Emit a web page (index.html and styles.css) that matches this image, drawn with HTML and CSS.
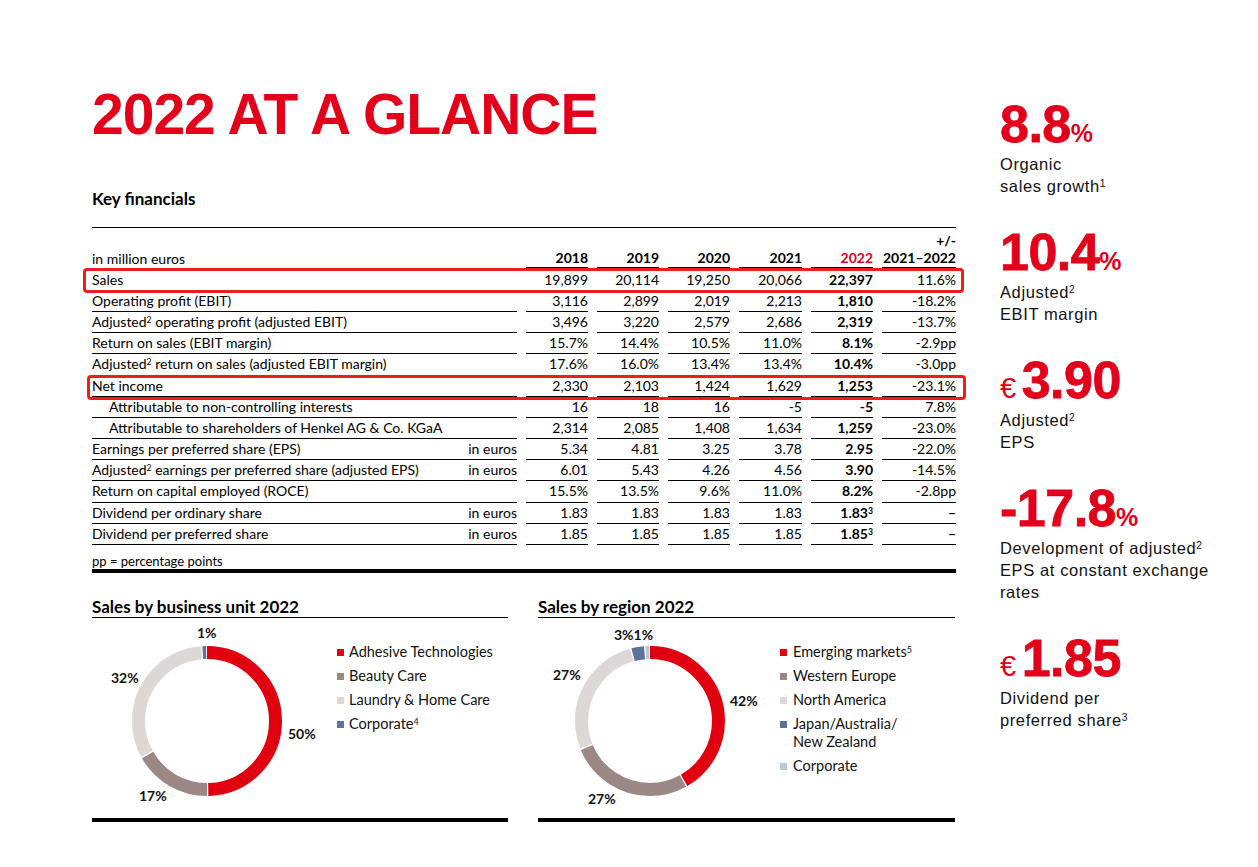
FILE: index.html
```html
<!DOCTYPE html>
<html lang="en">
<head>
<meta charset="utf-8">
<title>2022 at a glance</title>
<link rel="stylesheet" href="styles.css">
</head>
<body>
<div class="page">
  <div class="main">
    <h1 class="title">2022 AT A GLANCE</h1>
    <h2 class="section-title">Key financials</h2>

    <div class="fin">
      <div class="row head">
        <div class="c lbl">in million euros</div>
        <div class="c">2018</div>
        <div class="c">2019</div>
        <div class="c">2020</div>
        <div class="c">2021</div>
        <div class="c red">2022</div>
        <div class="c two"><span>+/-</span><span>2021–2022</span></div>
      </div>

      <div class="row hl hl-sales">
        <div class="c lbl"><span>Sales</span></div>
        <div class="c">19,899</div><div class="c">20,114</div><div class="c">19,250</div><div class="c">20,066</div>
        <div class="c b">22,397</div><div class="c">11.6%</div>
      </div>
      <div class="row">
        <div class="c lbl"><span>Operating profit (EBIT)</span></div>
        <div class="c">3,116</div><div class="c">2,899</div><div class="c">2,019</div><div class="c">2,213</div>
        <div class="c b">1,810</div><div class="c">-18.2%</div>
      </div>
      <div class="row">
        <div class="c lbl"><span>Adjusted<span class="sup">2</span> operating profit (adjusted EBIT)</span></div>
        <div class="c">3,496</div><div class="c">3,220</div><div class="c">2,579</div><div class="c">2,686</div>
        <div class="c b">2,319</div><div class="c">-13.7%</div>
      </div>
      <div class="row">
        <div class="c lbl"><span>Return on sales (EBIT margin)</span></div>
        <div class="c">15.7%</div><div class="c">14.4%</div><div class="c">10.5%</div><div class="c">11.0%</div>
        <div class="c b">8.1%</div><div class="c">-2.9pp</div>
      </div>
      <div class="row">
        <div class="c lbl"><span>Adjusted<span class="sup">2</span> return on sales (adjusted EBIT margin)</span></div>
        <div class="c">17.6%</div><div class="c">16.0%</div><div class="c">13.4%</div><div class="c">13.4%</div>
        <div class="c b">10.4%</div><div class="c">-3.0pp</div>
      </div>
      <div class="row hl hl-net">
        <div class="c lbl"><span>Net income</span></div>
        <div class="c">2,330</div><div class="c">2,103</div><div class="c">1,424</div><div class="c">1,629</div>
        <div class="c b">1,253</div><div class="c">-23.1%</div>
      </div>
      <div class="row">
        <div class="c lbl ind"><span>Attributable to non-controlling interests</span></div>
        <div class="c">16</div><div class="c">18</div><div class="c">16</div><div class="c">-5</div>
        <div class="c b">-5</div><div class="c">7.8%</div>
      </div>
      <div class="row">
        <div class="c lbl ind"><span>Attributable to shareholders of Henkel AG &amp; Co. KGaA</span></div>
        <div class="c">2,314</div><div class="c">2,085</div><div class="c">1,408</div><div class="c">1,634</div>
        <div class="c b">1,259</div><div class="c">-23.0%</div>
      </div>
      <div class="row">
        <div class="c lbl"><span>Earnings per preferred share (EPS)</span><span>in euros</span></div>
        <div class="c">5.34</div><div class="c">4.81</div><div class="c">3.25</div><div class="c">3.78</div>
        <div class="c b">2.95</div><div class="c">-22.0%</div>
      </div>
      <div class="row">
        <div class="c lbl"><span>Adjusted<span class="sup">2</span> earnings per preferred share (adjusted EPS)</span><span>in euros</span></div>
        <div class="c">6.01</div><div class="c">5.43</div><div class="c">4.26</div><div class="c">4.56</div>
        <div class="c b">3.90</div><div class="c">-14.5%</div>
      </div>
      <div class="row">
        <div class="c lbl"><span>Return on capital employed (ROCE)</span></div>
        <div class="c">15.5%</div><div class="c">13.5%</div><div class="c">9.6%</div><div class="c">11.0%</div>
        <div class="c b">8.2%</div><div class="c">-2.8pp</div>
      </div>
      <div class="row">
        <div class="c lbl"><span>Dividend per ordinary share</span><span>in euros</span></div>
        <div class="c">1.83</div><div class="c">1.83</div><div class="c">1.83</div><div class="c">1.83</div>
        <div class="c b">1.83<span class="sup">3</span></div><div class="c b">–</div>
      </div>
      <div class="row">
        <div class="c lbl"><span>Dividend per preferred share</span><span>in euros</span></div>
        <div class="c">1.85</div><div class="c">1.85</div><div class="c">1.85</div><div class="c">1.85</div>
        <div class="c b">1.85<span class="sup">3</span></div><div class="c b">–</div>
      </div>

      <p class="note">pp = percentage points</p>
    </div>

    <div class="bottom">
      <section class="panel">
        <h3 class="panel-title">Sales by business unit 2022</h3>
        <div class="chart-row">
          <div class="canvas canvas-left">
            <svg class="donut donut-left" width="160" height="160" viewBox="0 0 160 160">
              <g transform="rotate(-90 80 80)" fill="none" stroke-width="13">
                <circle cx="80" cy="80" r="68.5" pathLength="100" stroke="#e1000f" stroke-dasharray="49.7 100" stroke-dashoffset="0"/>
                <circle cx="80" cy="80" r="68.5" pathLength="100" stroke="#9b8783" stroke-dasharray="16.7 100" stroke-dashoffset="-50"/>
                <circle cx="80" cy="80" r="68.5" pathLength="100" stroke="#ddd7d5" stroke-dasharray="31.7 100" stroke-dashoffset="-67"/>
                <circle cx="80" cy="80" r="68.5" pathLength="100" stroke="#5a729c" stroke-dasharray="0.8 100" stroke-dashoffset="-99"/>
              </g>
            </svg>
            <span class="pl" style="left:105px;top:7px">1%</span>
            <span class="pl" style="left:19px;top:52px">32%</span>
            <span class="pl" style="left:47px;top:170px">17%</span>
            <span class="pl" style="left:196px;top:108px">50%</span>
          </div>
          <ul class="legend">
            <li><i class="sq c-red"></i><span>Adhesive Technologies</span></li>
            <li><i class="sq c-brown"></i><span>Beauty Care</span></li>
            <li><i class="sq c-light"></i><span>Laundry &amp; Home Care</span></li>
            <li><i class="sq c-blue"></i><span>Corporate<span class="sup">4</span></span></li>
          </ul>
        </div>
      </section>

      <section class="panel">
        <h3 class="panel-title">Sales by region 2022</h3>
        <div class="chart-row">
          <div class="canvas canvas-right">
            <svg class="donut donut-right" width="160" height="160" viewBox="0 0 160 160">
              <g transform="rotate(-90 80 80)" fill="none" stroke-width="13">
                <circle cx="80" cy="80" r="68.5" pathLength="100" stroke="#e1000f" stroke-dasharray="41.7 100" stroke-dashoffset="0"/>
                <circle cx="80" cy="80" r="68.5" pathLength="100" stroke="#9b8783" stroke-dasharray="26.7 100" stroke-dashoffset="-42"/>
                <circle cx="80" cy="80" r="68.5" pathLength="100" stroke="#ddd7d5" stroke-dasharray="26.7 100" stroke-dashoffset="-69"/>
                <circle cx="80" cy="80" r="68.5" pathLength="100" stroke="#5a729c" stroke-dasharray="2.7 100" stroke-dashoffset="-96"/>
                <circle cx="80" cy="80" r="68.5" pathLength="100" stroke="#b8cad9" stroke-dasharray="0.8 100" stroke-dashoffset="-99"/>
              </g>
            </svg>
            <span class="pl" style="left:76px;top:9px">3%1%</span>
            <span class="pl" style="left:15px;top:49px">27%</span>
            <span class="pl" style="left:192px;top:75px">42%</span>
            <span class="pl" style="left:50px;top:173px">27%</span>
          </div>
          <ul class="legend legend-right">
            <li><i class="sq c-red"></i><span>Emerging markets<span class="sup">5</span></span></li>
            <li><i class="sq c-brown"></i><span>Western Europe</span></li>
            <li><i class="sq c-light"></i><span>North America</span></li>
            <li><i class="sq c-blue"></i><span>Japan/Australia/<br>New Zealand</span></li>
            <li><i class="sq c-lblue"></i><span>Corporate</span></li>
          </ul>
        </div>
      </section>
    </div>
  </div>

  <aside class="stats">
    <div class="stat">
      <div class="num">8.8<span class="pct">%</span></div>
      <div class="lab">Organic<br>sales growth<span class="sup">1</span></div>
    </div>
    <div class="stat">
      <div class="num">10.4<span class="pct">%</span></div>
      <div class="lab">Adjusted<span class="sup">2</span><br>EBIT margin</div>
    </div>
    <div class="stat">
      <div class="num"><span class="eur">€</span>3.90</div>
      <div class="lab">Adjusted<span class="sup">2</span><br>EPS</div>
    </div>
    <div class="stat">
      <div class="num">-17.8<span class="pct">%</span></div>
      <div class="lab">Development of adjusted<span class="sup">2</span><br>EPS at constant exchange<br>rates</div>
    </div>
    <div class="stat">
      <div class="num"><span class="eur">€</span>1.85</div>
      <div class="lab">Dividend per<br>preferred share<span class="sup">3</span></div>
    </div>
  </aside>
</div>
</body>
</html>
```

FILE: styles.css
```css
* { box-sizing: border-box; }
html, body { margin: 0; padding: 0; background: #fff; }
body { font-family: Lato, "Liberation Sans", sans-serif; color: #000; }

.page {
  display: flex;
  width: 1258px;
  height: 867px;
  padding: 86px 0 0 92px;
  overflow: hidden;
}
.main { width: 864px; flex: none; }

.title {
  margin: 0;
  font: 700 57px/57px "Liberation Sans", Arial, sans-serif;
  letter-spacing: -1px;
  color: #e2001a;
  white-space: nowrap;
}
.section-title {
  margin: 45px 0 0;
  font: 700 17px/22px Lato, sans-serif;
  color: #000;
}

.sup { font-size: 0.62em; vertical-align: 0.5em; line-height: 0; }

/* table */
.fin {
  margin-top: 17px;
  border-top: 1px solid #000;
  border-bottom: 4px solid #000;
  position: relative;
}
.row {
  display: grid;
  grid-template-columns: 425px 62px 62px 62px 63px 62px 74px;
  column-gap: 9px;
  height: 21.17px;
  position: relative;
  font-size: 14px;
}
.row > .c {
  border-bottom: 1px solid #000;
  text-align: right;
  line-height: 20px;
  white-space: nowrap;
}
.row > .lbl {
  text-align: left;
  display: flex;
  justify-content: space-between;
}
.row > .ind { padding-left: 17px; }
.row > .b { font-weight: 700; }

.head { height: 40px; }
.head > .c {
  display: flex;
  align-items: flex-end;
  justify-content: flex-end;
  font-weight: 700;
  line-height: 17px;
  padding-bottom: 1px;
}
.head > .lbl { border-bottom: none; font-weight: 400; justify-content: flex-start; }
.head > .red { color: #e2001a; }
.head > .two { flex-direction: column; align-items: flex-end; }

.hl-sales { height: 23px; }
.hl-sales > .c { padding-top: 2px; }

.hl::after {
  content: "";
  position: absolute;
  top: 0;
  bottom: -2px;
  border: 3px solid #f01c1c;
  border-radius: 4px;
  pointer-events: none;
}
.hl-sales::after { left: -9px; right: -8px; }
.hl-net::after { left: -5px; right: -10px; top: -1px; bottom: -3px; }

.note {
  margin: 8px 0 0;
  font-size: 13px;
  line-height: 16px;
}

/* bottom */
.bottom {
  display: flex;
  gap: 30px;
  margin-top: 24px;
}
.panel {
  width: 417px;
  border-bottom: 4px solid #000;
}
.panel:first-child { width: 416px; }
.panel-title {
  margin: 0;
  font: 700 17px/20px Lato, sans-serif;
  color: #000;
  border-bottom: 1px solid #000;
}
.chart-row { display: flex; height: 200px; }
.canvas { position: relative; flex: none; height: 200px; }
.canvas-left { width: 245px; }
.canvas-right { width: 242px; }
.donut { position: absolute; top: 23px; }
.donut-left { left: 35px; }
.donut-right { left: 32px; }
.pl {
  position: absolute;
  font-weight: 700;
  font-size: 14px;
  line-height: 16px;
  color: #111;
  white-space: nowrap;
}

.legend {
  list-style: none;
  margin: 22px 0 0;
  padding: 0;
  font-size: 14.5px;
  line-height: 18px;
  color: #111;
}
.legend li { display: flex; padding: 3px 0; }
.sq { flex: none; width: 7px; height: 7px; margin: 6px 5px 0 0; }
.legend-right .sq { margin-right: 6px; }
.c-red { background: #e1000f; }
.c-brown { background: #9b8783; }
.c-light { background: #ddd7d5; }
.c-blue { background: #5a729c; }
.c-lblue { background: #b8cad9; }

/* stats */
.stats {
  margin-left: 44px;
  padding-top: 18px;
  width: 230px;
  flex: none;
}
.stat { margin-bottom: 35px; }
.num {
  font: 700 52px/40px "Liberation Sans", Arial, sans-serif;
  color: #e2001a;
  letter-spacing: -0.5px;
  white-space: nowrap;
  -webkit-text-stroke: 0.8px #e2001a;
}
.pct { font-size: 25px; line-height: 0; letter-spacing: 0; -webkit-text-stroke: 0; }
.eur { font-size: 29px; line-height: 0; font-weight: 400; margin-right: 6px; -webkit-text-stroke: 0; }
.lab {
  margin-top: 9px;
  font: 400 16.5px/22px "Liberation Sans", Arial, sans-serif;
  letter-spacing: 0.6px;
  color: #111;
}
```
